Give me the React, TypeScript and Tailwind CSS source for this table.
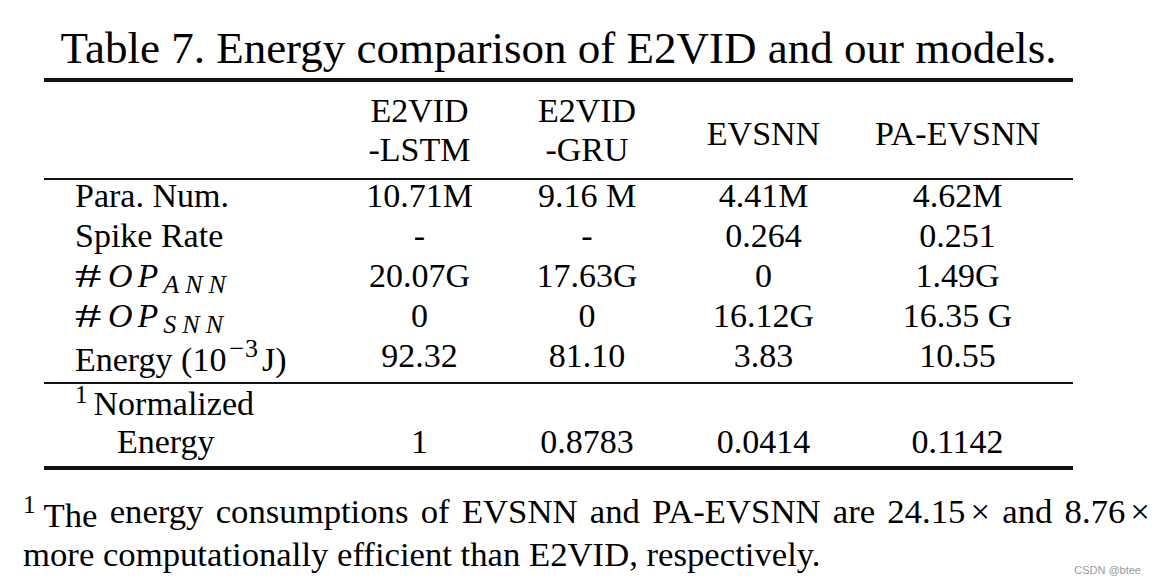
const Hash = () => (
  <span className="inline-block w-[33px]">
    <span className="inline-block origin-left scale-x-[1.55]">#</span>
  </span>
)

const rows = [
  { key: 'para', label: <>Para. Num.</>, values: ['10.71M', '9.16 M', '4.41M', '4.62M'] },
  { key: 'spike', label: <>Spike Rate</>, values: ['-', '-', '0.264', '0.251'] },
  {
    key: 'opann',
    label: (
      <>
        <Hash />
        <span className="italic tracking-[5px]">OP</span>
        <span className="italic text-[26px] leading-none align-[-6px] tracking-[6px]">ANN</span>
      </>
    ),
    values: ['20.07G', '17.63G', '0', '1.49G'],
  },
  {
    key: 'opsnn',
    label: (
      <>
        <Hash />
        <span className="italic tracking-[5px]">OP</span>
        <span className="italic text-[26px] leading-none align-[-6px] tracking-[6px]">SNN</span>
      </>
    ),
    values: ['0', '0', '16.12G', '16.35 G'],
  },
  {
    key: 'energy',
    label: (
      <>
        Energy (10
        <span className="text-[26px] leading-none align-[14px] ml-[3px] mr-[3px] tracking-[1px]">−3</span>J)
      </>
    ),
    values: ['92.32', '81.10', '3.83', '10.55'],
  },
]

const Row = ({ label, values }: { label: React.ReactNode; values: string[] }) => (
  <div className="grid grid-cols-[292px_167px_168px_185px_203px] pr-[14px] h-[40px] leading-[40px] whitespace-nowrap">
    <div className="pl-[31px]">{label}</div>
    {values.map((v, i) => (
      <div key={i} className="text-center">
        {v}
      </div>
    ))}
  </div>
)

export default function App() {
  return (
    <div className="relative w-[1156px] h-[585px] bg-white text-black font-['Liberation_Serif',serif] overflow-hidden">
      <div className="ml-[44px] w-[1029px]">
        <div className="mt-[26px] h-[45px] text-[45px] leading-[45px] text-center pl-[2px] pr-[2px] whitespace-nowrap">
          Table 7. Energy comparison of E2VID and our models.
        </div>
        <div className="mt-[7px] h-[4px] bg-[#111]" />

        <div className="text-[34px]">
          <div className="grid grid-cols-[292px_167px_168px_185px_203px] pr-[14px] pt-[9px] pb-[9px] leading-[39px] whitespace-nowrap">
            <div />
            <div className="text-center">
              E2VID
              <br />
              -LSTM
            </div>
            <div className="text-center">
              E2VID
              <br />
              -GRU
            </div>
            <div className="flex items-center justify-center pt-[6px]">EVSNN</div>
            <div className="flex items-center justify-center pt-[6px]">PA-EVSNN</div>
          </div>
          <div className="h-[2px] bg-[#111]" />

          <div className="-mt-[4px]">
            {rows.map((r) => (
              <Row key={r.key} label={r.label} values={r.values} />
            ))}
          </div>
          <div className="mt-[6px] h-[2px] bg-[#111]" />

          <div className="-mt-[2px] leading-[40px] whitespace-nowrap">
            <div className="pl-[31px] h-[40px]">
              <span className="text-[25px] leading-none align-[12px] mr-[6px]">1</span>Normalized
            </div>
            <div className="grid grid-cols-[292px_167px_168px_185px_203px] pr-[14px] h-[40px]">
              <div className="pl-[73px]">Energy</div>
              <div className="text-center">1</div>
              <div className="text-center">0.8783</div>
              <div className="text-center">0.0414</div>
              <div className="text-center">0.1142</div>
            </div>
          </div>
          <div className="mt-[4px] h-[4px] bg-[#111]" />
        </div>
      </div>

      <div className="mt-[22px] pl-[23px] pr-[6px] text-[34.7px] leading-[39px]">
        <div className="whitespace-nowrap flex justify-between">
          <span>
            <span className="text-[25px] leading-none align-[14px] mr-[8px]">1</span>The
          </span>
          <span>energy</span>
          <span>consumptions</span>
          <span>of</span>
          <span>EVSNN</span>
          <span>and</span>
          <span>PA-EVSNN</span>
          <span>are</span>
          <span>
            24.15<span className="ml-[5px]">×</span>
          </span>
          <span>and</span>
          <span>
            8.76<span className="ml-[5px]">×</span>
          </span>
        </div>
        <div className="whitespace-nowrap">more computationally efficient than E2VID, respectively.</div>
      </div>

      <div className="absolute right-[15px] bottom-[9px] text-[11px] leading-none text-[#9a9a9a] font-['Liberation_Sans',sans-serif]">
        CSDN @btee
      </div>
    </div>
  )
}
